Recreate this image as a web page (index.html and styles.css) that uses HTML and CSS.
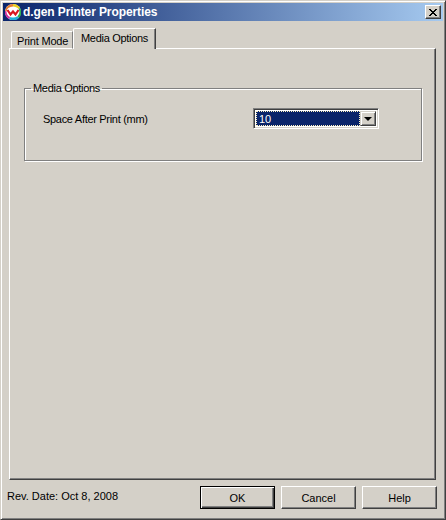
FILE: index.html
```html
<!DOCTYPE html>
<html lang="en">
<head>
<meta charset="utf-8">
<title>d.gen Printer Properties</title>
<link rel="stylesheet" href="styles.css">
</head>
<body>
<div class="window">
  <div class="titlebar">
    <svg class="app-icon" width="16" height="16" viewBox="0 0 16 16">
      <circle cx="8" cy="8" r="8" fill="#f4f4f4"/>
      <path d="M8 0A8 8 0 0 1 15 4L8 8Z" fill="#e8d020"/>
      <path d="M15 4A8 8 0 0 1 14 14L8 8Z" fill="#30b050"/>
      <path d="M14 14A8 8 0 0 1 4 15L8 8Z" fill="#20b0d8"/>
      <path d="M4 15A8 8 0 0 1 0 7L8 8Z" fill="#d030a0"/>
      <path d="M0 7A8 8 0 0 1 8 0L8 8Z" fill="#e88030"/>
      <ellipse cx="8" cy="8" rx="6.5" ry="5.5" fill="#fff"/>
      <path d="M2.5 6L5.5 10.5L8 7.5L10.5 10.5L13.5 6" fill="none" stroke="#d81820" stroke-width="2.2"/>
    </svg>
    <span class="title-text">d.gen Printer Properties</span>
    <button class="close-btn" type="button" aria-label="Close">
      <svg width="8" height="7" viewBox="0 0 8 7"><path d="M0 0h2v1h1v1h2V1h1V0h2v1H7v1H6v1H5v1h1v1h1v1h1v1H6V6H5V5H3v1H2v1H0V6h1V5h1V4h1V3H2V2H1V1H0Z" fill="#000"/></svg>
    </button>
  </div>
  <div class="body">
    <div class="tabs">
      <div class="tab">Print Mode</div>
      <div class="tab tab-active">Media Options</div>
    </div>
    <div class="panel">
      <fieldset class="group">
        <legend class="legend">Media Options</legend>
        <div class="row">
          <span class="field-label">Space After Print (mm)</span>
          <div class="combo">
            <div class="combo-value"><span class="combo-focus">10</span></div>
            <div class="combo-arrow"><i class="arrow"></i></div>
          </div>
        </div>
      </fieldset>
    </div>
    <div class="footer">
      <span class="rev">Rev. Date: Oct 8, 2008</span>
      <div class="actions">
        <button class="btn btn-default" type="button">OK</button>
        <button class="btn" type="button">Cancel</button>
        <button class="btn" type="button">Help</button>
      </div>
    </div>
  </div>
</div>
</body>
</html>
```
FILE: styles.css
```css
* { box-sizing: border-box; }
html, body { margin: 0; padding: 0; background: #d4d0c8; }
body { width: 446px; height: 520px; overflow: hidden; font: 11px/14px "Liberation Sans", Arial, sans-serif; color: #000; }
button { font: inherit; color: inherit; margin: 0; padding: 0; }

.window {
  width: 446px; height: 520px;
  display: flex; flex-direction: column;
  padding: 2px;
  background: #d4d0c8;
  border: 1px solid; border-color: #d4d0c8 #404040 #404040 #d4d0c8;
  box-shadow: inset 1px 1px 0 #fff, inset -1px -1px 0 #808080;
}

.titlebar {
  height: 18px; flex: none;
  display: flex; align-items: center;
  padding: 0 2px;
  background: linear-gradient(to right, #0a246a, #a6caf0);
  color: #fff;
}
.app-icon { flex: none; margin-right: 2px; }
.title-text { font-weight: 700; font-size: 12px; letter-spacing: -0.1px; flex: 1; white-space: nowrap; }
.close-btn {
  width: 16px; height: 14px; flex: none;
  display: flex; align-items: center; justify-content: center;
  background: #d4d0c8;
  border: 1px solid; border-color: #fff #404040 #404040 #fff;
  box-shadow: inset -1px -1px 0 #808080;
}

.body { flex: 1; display: flex; flex-direction: column; padding: 8px 7px 0 6px; min-height: 0; }

.tabs { display: flex; align-items: flex-end; height: 20px; flex: none; padding-left: 2px; position: relative; z-index: 1; margin-bottom: -1px; }
.tab {
  width: 62px; height: 18px;
  padding: 2px 0 0 5px;
  letter-spacing: -0.2px;
  background: #d4d0c8;
  border-top: 1px solid #fff; border-left: 1px solid #fff;
  border-right: 1px solid #808080;
  border-bottom: 1px solid #fff;
  border-top-left-radius: 2px;
  white-space: nowrap;
}
.tab-active {
  width: 83px; height: 21px;
  padding: 2px 0 0 7px;
  letter-spacing: -0.3px;
  border-bottom: 0;
  border-right: 1px solid #404040;
  box-shadow: inset -1px 0 0 #808080;
}

.panel {
  height: 432px; flex: none;
  padding: 32px 13px 0 14px;
  border: 1px solid; border-color: #fff #404040 #404040 #fff;
  box-shadow: inset -1px -1px 0 #808080;
}
.group {
  margin: 0; padding: 0 0 0 18px;
  height: 80px;
  border: 1px solid #808080;
  box-shadow: 1px 1px 0 #fff, inset 1px 1px 0 #fff;
}
.legend { padding: 0 2px; margin-left: -12px; line-height: 14px; letter-spacing: -0.3px; }
.row { display: flex; align-items: center; height: 21px; margin-top: 13px; }
.field-label { width: 210px; flex: none; white-space: nowrap; letter-spacing: -0.3px; }

.combo {
  width: 126px; height: 21px; flex: none;
  display: flex;
  padding: 2px;
  background: #fff;
  border: 1px solid; border-color: #808080 #fff #fff #808080;
  box-shadow: inset 1px 1px 0 #404040, inset -1px -1px 0 #d4d0c8;
}
.combo-value { flex: 1; background: #0a246a; color: #fff; min-width: 0; }
.combo-focus { display: block; height: 100%; padding: 1px 0 0 2px; border: 1px dotted #fff3c0; line-height: 13px; }
.combo-arrow {
  width: 16px; flex: none;
  display: flex; align-items: center; justify-content: center;
  background: #d4d0c8;
  border: 1px solid; border-color: #d4d0c8 #404040 #404040 #d4d0c8;
  box-shadow: inset 1px 1px 0 #fff, inset -1px -1px 0 #808080;
}
.arrow { display: block; width: 0; height: 0; border: 4px solid transparent; border-top-color: #000; border-bottom: 0; }

.footer { flex: 1; display: flex; justify-content: space-between; align-items: flex-start; padding-top: 6px; }
.rev { margin: 3px 0 0 -2px; white-space: nowrap; }
.actions { display: flex; gap: 6px; margin-right: -1px; }
.btn {
  width: 75px; height: 23px;
  background: #d4d0c8;
  border: 1px solid; border-color: #fff #404040 #404040 #fff;
  box-shadow: inset -1px -1px 0 #808080;
}
.btn-default {
  border: 1px solid #000;
  box-shadow: inset 1px 1px 0 #fff, inset -1px -1px 0 #404040, inset -2px -2px 0 #808080;
}
```
